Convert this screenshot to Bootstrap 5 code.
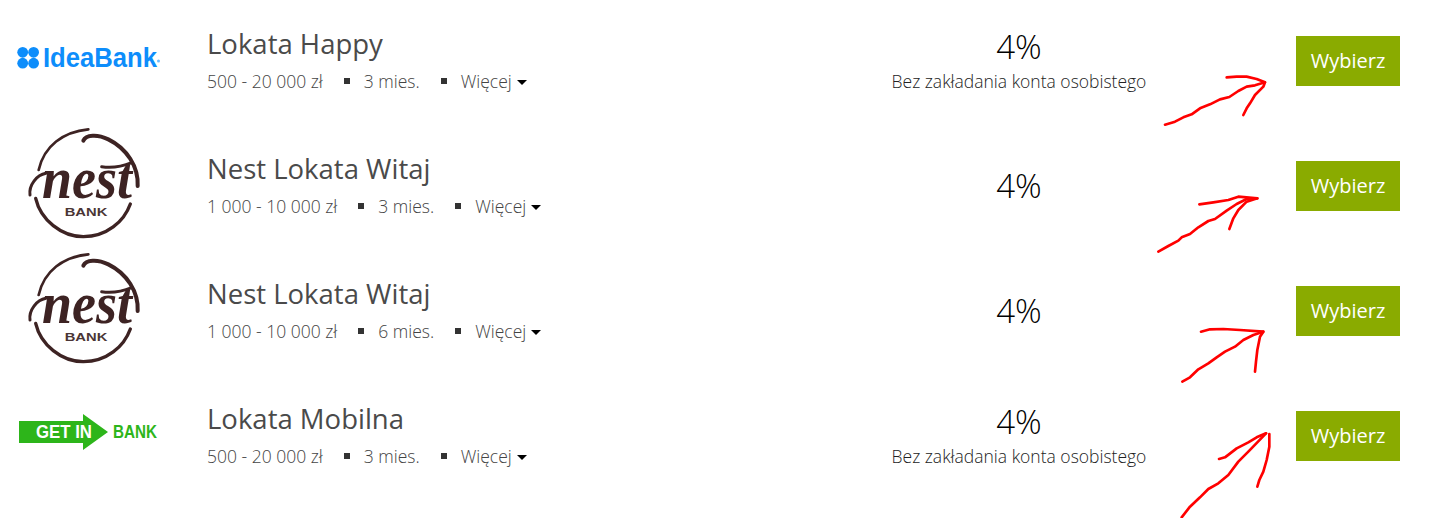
<!doctype html>
<html lang="pl">
<head>
    <meta charset="utf-8" />
    <meta content="width=device-width, initial-scale=1" name="viewport" />
    <title>Lokaty</title>
    <link href="https://cdn.jsdelivr.net/npm/bootstrap@5.3.0/dist/css/bootstrap.min.css" rel="stylesheet" />
    <style>
        body {
            background-color: #fff;
            font-family: "Open Sans", "Liberation Sans", sans-serif;
        }

        .offer-list {
            padding-right: 31px;
            min-height: 518px;
        }

        .offer-row {
            height: 125px;
            padding-bottom: 3px;
        }

        .offer-logo {
            width: 207px;
            height: 122px;
            flex-shrink: 0;
            overflow: visible;
        }

        .offer-text {
            margin-bottom: 5px;
        }

        .offer-title {
            font-size: 27.5px;
            line-height: 36px;
            font-weight: 400;
            color: #4a4a4a;
            margin-bottom: 8px;
        }

        .offer-meta {
            font-size: 17.5px;
            line-height: 22px;
            font-weight: 300;
            color: #444;
        }

        .meta-dot {
            width: 6px;
            height: 6px;
            background-color: #333;
            margin-left: 21px;
            margin-right: 14px;
        }

        .more-link {
            color: #444;
            text-decoration: none;
        }

        .more-link.dropdown-toggle::after {
            color: #000;
            margin-left: 5px;
            vertical-align: 3px;
            border-top-width: 5px;
            border-left-width: 5px;
            border-right-width: 5px;
        }

        .offer-rate {
            width: 300px;
            margin-right: 127px;
            flex-shrink: 0;
        }

        .rate-value {
            font-size: 33px;
            line-height: 44px;
            font-weight: 300;
            color: #000;
        }

        .rate-note {
            font-size: 17.5px;
            line-height: 22px;
            font-weight: 300;
            color: #222;
            margin-top: 1px;
            margin-bottom: 5px;
        }

        .btn-pick {
            width: 104px;
            height: 50px;
            flex-shrink: 0;
            background-color: #8aab00;
            border: 0;
            border-radius: 0;
            color: #fff;
            font-size: 20px;
            line-height: 50px;
            padding: 0;
        }

        .btn-pick:hover {
            background-color: #7a9800;
            color: #fff;
        }

        .arrow-marks {
            position: absolute;
            left: 1140px;
            top: 20px;
            width: 280px;
            height: 498px;
            pointer-events: none;
        }

        .arrow-marks path {
            fill: none;
            stroke: #f00;
            stroke-width: 8;
            stroke-linecap: round;
            stroke-linejoin: round;
        }
    </style>
</head>
<body class="position-relative">

<svg class="d-none">
    <symbol id="nestLogo" viewBox="0 0 390 375" overflow="visible">
        <g fill="none" stroke="#3d2323" stroke-linecap="round">
            <path stroke-width="8" d="M205 28C130 35 72 78 56 150" />
            <path stroke-width="12" d="M190 62C198 44 232 42 265 58C320 85 356 140 353 198" />
            <path stroke-width="10" d="M47 235C62 300 125 350 190 350C260 350 312 305 331 252" />
            <path stroke-width="9" d="M30 225C26 195 50 165 78 160" />
            <path stroke-width="9" d="M245 140C270 144 305 140 335 128" />
        </g>
        <text x="66" y="234" font-family="Liberation Serif" font-style="italic" font-weight="700" font-size="178" textLength="270" lengthAdjust="spacingAndGlyphs" fill="#3d2323">nest</text>
        <text x="134" y="288" font-family="Liberation Sans" font-weight="700" font-size="35" textLength="128" lengthAdjust="spacingAndGlyphs" fill="#4a3535">BANK</text>
    </symbol>
</svg>

<div class="offer-list">
    <div class="offer-row d-flex align-items-center">
        <svg class="offer-logo" viewBox="0 0 207 122">
            <g fill="#0d8dfb">
                <circle cx="22.7" cy="52.3" r="5.4" />
                <circle cx="33.6" cy="52.3" r="5.4" />
                <circle cx="22.7" cy="63.2" r="5.4" />
                <circle cx="33.6" cy="63.2" r="5.4" />
                <text x="43" y="67" font-family="Liberation Sans" font-weight="700" font-size="27" textLength="114" lengthAdjust="spacingAndGlyphs">IdeaBank</text>
                <circle cx="158.5" cy="61" r="1.5" opacity=".6" />
            </g>
        </svg>
        <div class="offer-text flex-grow-1">
            <div class="offer-title">Lokata Happy</div>
            <div class="offer-meta d-flex align-items-center">
                <span>500 - 20 000 zł</span><span class="meta-dot"></span><span>3 mies.</span><span class="meta-dot"></span><a class="more-link dropdown-toggle" href="#">Więcej</a>
            </div>
        </div>
        <div class="offer-rate text-center">
            <div class="rate-value">4%</div>
            <div class="rate-note">Bez zakładania konta osobistego</div>
        </div>
        <a class="btn btn-pick" href="#">Wybierz</a>
    </div>

    <div class="offer-row d-flex align-items-center">
        <svg class="offer-logo" viewBox="0 0 207 122"><use href="#nestLogo" x="20" y="-5" width="130" height="125" /></svg>
        <div class="offer-text flex-grow-1">
            <div class="offer-title">Nest Lokata Witaj</div>
            <div class="offer-meta d-flex align-items-center">
                <span>1 000 - 10 000 zł</span><span class="meta-dot"></span><span>3 mies.</span><span class="meta-dot"></span><a class="more-link dropdown-toggle" href="#">Więcej</a>
            </div>
        </div>
        <div class="offer-rate text-center">
            <div class="rate-value">4%</div>
        </div>
        <a class="btn btn-pick" href="#">Wybierz</a>
    </div>

    <div class="offer-row d-flex align-items-center">
        <svg class="offer-logo" viewBox="0 0 207 122"><use href="#nestLogo" x="20" y="-5" width="130" height="125" /></svg>
        <div class="offer-text flex-grow-1">
            <div class="offer-title">Nest Lokata Witaj</div>
            <div class="offer-meta d-flex align-items-center">
                <span>1 000 - 10 000 zł</span><span class="meta-dot"></span><span>6 mies.</span><span class="meta-dot"></span><a class="more-link dropdown-toggle" href="#">Więcej</a>
            </div>
        </div>
        <div class="offer-rate text-center">
            <div class="rate-value">4%</div>
        </div>
        <a class="btn btn-pick" href="#">Wybierz</a>
    </div>

    <div class="offer-row d-flex align-items-center">
        <svg class="offer-logo" viewBox="0 0 207 122">
            <polygon fill="#2db51a" points="19,46 83,46 83,39 108,57 83,75 83,68 19,68" />
            <text x="36" y="63" fill="#fff" font-family="Liberation Sans" font-weight="700" font-size="18" textLength="56" lengthAdjust="spacingAndGlyphs">GET IN</text>
            <text x="113" y="63" fill="#2db51a" font-family="Liberation Sans" font-weight="700" font-size="18" textLength="44" lengthAdjust="spacingAndGlyphs">BANK</text>
        </svg>
        <div class="offer-text flex-grow-1">
            <div class="offer-title">Lokata Mobilna</div>
            <div class="offer-meta d-flex align-items-center">
                <span>500 - 20 000 zł</span><span class="meta-dot"></span><span>3 mies.</span><span class="meta-dot"></span><a class="more-link dropdown-toggle" href="#">Więcej</a>
            </div>
        </div>
        <div class="offer-rate text-center">
            <div class="rate-value">4%</div>
            <div class="rate-note">Bez zakładania konta osobistego</div>
        </div>
        <a class="btn btn-pick" href="#">Wybierz</a>
    </div>
</div>

<!-- red hand-drawn arrows on top of the list -->
<svg class="arrow-marks" viewBox="0 0 840 1494">
    <path d="M75 314L105 305L130 292L155 283L180 265L210 253L240 238L268 231L295 213L320 200L345 196L375 187" />
    <path d="M260 172L290 170L320 170L350 177L375 187L370 200L345 225L330 250L320 265L310 285" />
    <path d="M55 695L85 678L115 662L125 652L150 642L175 622L205 603L225 597L260 572L290 552L320 537L352 535" />
    <path d="M178 553L220 547L265 540L295 530L352 535L320 545L295 570L280 595L268 627" />
    <path d="M127 1085L150 1072L175 1048L205 1030L230 1012L255 995L285 980L310 960L340 945L370 935" />
    <path d="M183 935L210 928L250 927L300 930L370 935L360 950L352 990L348 1025L345 1055" />
    <path d="M125 1492L150 1460L180 1432L205 1407L235 1390L265 1365L295 1325L325 1295L378 1240" />
    <path d="M237 1317L255 1312L290 1285L325 1267L350 1252L378 1240" />
    <path d="M388 1242L388 1280L380 1320L370 1355L358 1380L352 1400" />
</svg>

<script src="https://cdn.jsdelivr.net/npm/bootstrap@5.3.0/dist/js/bootstrap.bundle.min.js"></script>
</body>
</html>
